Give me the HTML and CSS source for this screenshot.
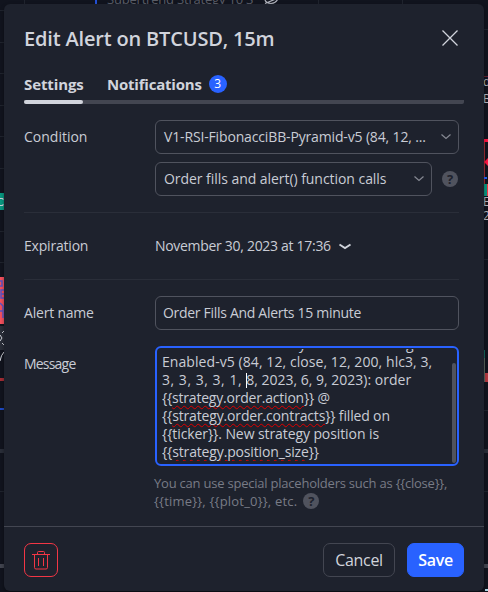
FILE: index.html
```
<!DOCTYPE html>
<html lang="en">
<head>
<meta charset="utf-8">
<title>Edit Alert</title>
<link rel="stylesheet" href="styles.css">
</head>
<body>
<div class="chart" aria-hidden="true">
  <svg width="488" height="592" viewBox="0 0 488 592">
    <path d="M24.5 0V4M318.5 0V4M402.5 0V4M0 10.5H4M0 42.5H4M0 73.5H4M0 105.5H4M0 136.5H4M0 168.5H4M0 231.5H4M0 262.5H4M0 491.5H4M484 29.5H488M484 259.5H488M484 410.5H488M484 491.5H488" stroke="#20242e"/>
    <path d="M96 0V4" stroke="#2451d6" stroke-width="2"/>
    <path d="M0 409H4" stroke="#1e4bc8" stroke-width="2"/>
    <path d="M0 451H4M484 451H488" stroke="#2a2e39" stroke-width="4"/>
    <path d="M0 566H4M484 566H488" stroke="#434651" stroke-width="4"/>
    <path d="M0 193H4V210H0z" fill="#089981"/>
    <path d="M0 198.500H3V200M0 205.500H3V204" fill="none" stroke="#d1d4dc"/>
    <path d="M0 277H4V324H0z" fill="#f7525f"/>
    <path d="M0 281h2v5h-2M4 290h-3v8h3M1 294h3M0 303l3 3v12M0 311h3" fill="none" stroke="#5b55c8" stroke-width="1.500"/>
    <path d="M0 326H4V350H0z" fill="#2a2e39"/>
    <path d="M0 335l2 3-2 3M4 331l-2 2M4 345l-2-2M4 352q-3 3-4 9" fill="none" stroke="#d1d4dc"/>
    <path d="M0 378H4V381H0z" fill="#a52d35"/>
    <path d="M265 3.500l12-5M265 0q1 3 6 3.500q5-.5 6.500-4" fill="none" stroke="#b2b5be" stroke-width="1.200"/>
    <path d="M484 76.500h4" stroke="#65202d"/>
    <path d="M484.500 140v45" stroke="#a52d35"/>
    <path d="M484 139h4v3h-4zM488 158l-4 4 4 4z" fill="#ff1744"/>
    <path d="M484 178h3" stroke="#2962ff" stroke-width="2"/>
    <path d="M484 184h3v12h-3z" fill="#089981"/>
    <path d="M487.500 184v12" stroke="#f23645"/>
    <path d="M484.500 350v8" stroke="#17695f"/>
    <path d="M484.500 358v24" stroke="#5c6660"/>
    <path d="M486.500 373v9" stroke="#b53a42" stroke-width="3"/>
    <path d="M485 590h3" stroke="#b2d8e8" stroke-width="2"/>
  </svg>
  <span class="strategy">Supertrend Strategy 10 3</span>
  <span class="tag tag-a">d</span><span class="tag tag-b">B</span><span class="tag tag-c">E</span><span class="tag tag-d">2</span>
</div>
<main class="dialog">
  <header class="head">
    <h1><span class="t-title">Edit Alert on BTCUSD, 15m</span></h1>
    <svg class="close" width="18" height="18" viewBox="0 0 18 18"><path d="M1.500 1.500l15 15m0-15l-15 15" fill="none" stroke="#d1d4dc" stroke-width="1.300"/></svg>
  </header>
  <nav class="tabs">
    <div class="tab active"><span class="t-set">Settings</span></div>
    <div class="tab"><span class="t-not">Notifications</span><b class="badge">3</b></div>
  </nav>
  <section class="row condition">
    <label>Condition</label>
    <div class="stack">
      <div class="field select"><span class="t-v1">V1-RSI-FibonacciBB-Pyramid-v5 (84, 12, ...</span><svg width="10" height="6" viewBox="0 0 10 6"><path d="M.5.5L5 4.500 9.500.5" fill="none" stroke="#868993" stroke-width="1.200"/></svg></div>
      <div class="pair">
        <div class="field select"><span class="t-ord">Order fills and alert() function calls</span><svg width="10" height="6" viewBox="0 0 10 6"><path d="M.5.5L5 4.500 9.500.5" fill="none" stroke="#868993" stroke-width="1.200"/></svg></div>
        <i class="help">?</i>
      </div>
    </div>
  </section>
  <section class="row expiration">
    <label class="t-exp">Expiration</label>
    <div class="date"><span class="t-date">November 30, 2023 at 17:36</span><svg width="14" height="8" viewBox="0 0 14 8"><path d="M1.500 2.500L7 6 12.500 2.500" fill="none" stroke="#d1d4dc" stroke-width="1.900"/></svg></div>
  </section>
  <section class="row name">
    <label class="t-alert">Alert name</label>
    <div class="field"><span class="t-name">Order Fills And Alerts 15 minute</span></div>
  </section>
  <section class="row message">
    <label class="t-msg">Message</label>
    <div>
      <div class="area">
        <div class="lines">
          <p class="l0"><span>y</span><span>g</span></p>
          <p class="l1">Enabled-v5 (84, 12, close, 12, 200, hlc3, 3,</p>
          <p class="l2"><span>3, 3, 3, 3, 1, </span><i class="caret"></i>8, 2023, 6, 9, 2023): order</p>
          <p class="l3">{{<u>strategy.order.action</u>}} @</p>
          <p class="l4">{{<u>strategy.order.contracts</u>}} filled on</p>
          <p class="l5">{{ticker}}. New strategy position is</p>
          <p class="l6">{{<u>strategy.position_size</u>}}</p>
        </div>
        <div class="thumb"></div>
      </div>
      <div class="hint"><p class="h1">You can use special placeholders such as {{close}},</p><p class="h2"><span>{{time}}, {{plot_0}}, etc.</span><i class="help">?</i></p></div>
    </div>
  </section>
  <footer class="foot">
    <button class="delete" aria-label="Delete"><svg width="18" height="20" viewBox="0 0 18 20"><path d="M0 4.500h18M2.500 4.500v13q0 1.500 1.500 1.500h10q1.500 0 1.500-1.500v-13M5.500 4V2.500q0-1 1-1h5q1 0 1 1V4M6.500 8v8M11.500 8v8" fill="none" stroke="#f23645"/></svg></button>
    <button class="cancel"><span class="t-can">Cancel</span></button>
    <button class="save"><span class="t-save">Save</span></button>
  </footer>
</main>
</body>
</html>
```
FILE: styles.css
```
* { box-sizing: border-box; }
body { margin: 0; width: 488px; height: 592px; overflow: hidden; position: relative; background: #11141e; color: #c9ccd5; font: 14px/18px "Open Sans", "Noto Sans", sans-serif; }
h1, p { margin: 0; font-weight: inherit; white-space: nowrap; }
.chart { position: absolute; inset: 0; }
.strategy { position: absolute; left: 107px; top: -9px; font-size: 13px; line-height: 16px; color: #5a5d67; white-space: nowrap; letter-spacing: -.2px; }
.tag { position: absolute; left: 483px; font-size: 12px; line-height: 14px; color: #b2b5be; }
.tag-a { top: 75px; }
.tag-b { top: 92px; }
.tag-c { top: 195px; }
.tag-d { top: 209px; }
.dialog { position: relative; margin: 4px 4px 0; width: 480px; height: 587px; border-radius: 6px; background: #1e222d; display: flex; flex-direction: column; box-shadow: 0 2px 4px rgba(0, 0, 0, .4); }
.dialog span { white-space: nowrap; }
.head { height: 68px; padding: 0 20px 0 20px; display: flex; justify-content: space-between; align-items: center; }
.head h1 { font-size: 20px; line-height: 28px; font-weight: 600; color: #d1d4dc; padding-top: 2px; letter-spacing: -.17px; }
.close { margin: 0 5px 1px 0; }
.tabs { height: 32px; margin: 0 20px; display: flex; gap: 24px; font-size: 15px; line-height: 16px; font-weight: 700; color: #d1d4dc; background: linear-gradient(#434651, #434651) bottom / 100% 4px no-repeat; border-radius: 2px; }
.tab { position: relative; display: flex; align-items: flex-start; }
.tab > span { margin-top: 4px; }
.active { width: 59px; }
.t-set { letter-spacing: -.1px; }
.t-not { letter-spacing: -.21px; }
.active::after { content: ""; position: absolute; left: 0; right: 0; bottom: 0; height: 4px; border-radius: 2px; background: #d1d4dc; }
.badge { width: 18px; height: 18px; margin: 3px 0 0 7px; border-radius: 50%; background: #2962ff; color: #fff; font-size: 12px; line-height: 18px; text-align: center; font-weight: 400; }
.row { display: grid; grid-template-columns: 131px 304px; margin-left: 20px; width: 435px; }
.row label { white-space: nowrap; }
.field { height: 34px; padding: 0 7px; border: 1px solid #50535e; border-radius: 6px; display: flex; align-items: center; }
.select { justify-content: space-between; padding: 0 7px 0 8px; }
.t-v1 { letter-spacing: -.15px; }
.t-ord { letter-spacing: -.05px; }
.t-exp, .t-alert { letter-spacing: -.2px; }
.t-date { letter-spacing: -.3px; }
.t-name { letter-spacing: -.3px; }
.t-msg { letter-spacing: -.8px; }
.condition { height: 109px; padding-top: 16px; border-bottom: 1px solid #2a2e39; }
.condition label { padding-top: 8px; }
.stack { display: grid; gap: 8px; align-content: start; }
.pair { display: flex; gap: 10px; align-items: center; }
.pair .field { width: 277px; }
.help { display: inline-block; flex: none; width: 16px; height: 16px; border-radius: 50%; background: #50535e; color: #1e222d; font: 700 13px/16px "Open Sans", sans-serif; text-align: center; }
.expiration { height: 67px; border-bottom: 1px solid #2a2e39; align-items: center; }
.date { display: flex; align-items: center; gap: 7px; }
.name { height: 50px; padding-top: 16px; align-items: center; }
.message { padding-top: 16px; }
.message label { padding-top: 9px; }
.area { position: relative; height: 120px; border: 2px solid #2962ff; border-radius: 6px; overflow: hidden; padding-left: 5px; }
.lines { margin-top: -13px; clip-path: inset(14px 0 0 0); }
.lines p { height: 18px; }
.lines u { text-decoration: underline wavy #e00000 1px; text-underline-offset: 2px; text-decoration-skip-ink: none; }
.lines .l0 { display: flex; gap: 100px; padding-left: 137px; }
.l1 { letter-spacing: .07px; }
.l2 span { letter-spacing: .53px; white-space: pre; }
.l3 { letter-spacing: -.21px; }
.l4 { letter-spacing: -.16px; }
.l5 { letter-spacing: -.09px; }
.l6 { letter-spacing: -.15px; }
.caret { display: inline-block; width: 1px; height: 15px; margin-right: -1px; vertical-align: -3px; background: #fff; }
.thumb { position: absolute; right: 1px; top: 15px; bottom: 1px; width: 4px; border-radius: 2px; background: #50535e; }
.hint { margin-top: 8px; margin-left: -1px; color: #787b86; font-size: 13px; }
.h1 { letter-spacing: -.22px; }
.h2 { display: flex; align-items: center; gap: 6px; letter-spacing: .2px; }
.foot { margin-top: auto; height: 65px; border-top: 1px solid #434651; padding: 1px 20px 0; display: flex; align-items: center; }
button { height: 34px; padding: 0; display: grid; place-items: center; border: 1px solid #434651; border-radius: 7px; background: none; color: #d1d4dc; font: 16px/20px "Open Sans", sans-serif; letter-spacing: -.3px; }
.delete { width: 34px; border-color: #f23645; margin-right: auto; }
.cancel { width: 72px; margin-right: 12px; }
.save { width: 57px; background: #2962ff; border-color: #2962ff; color: #fff; font-weight: 600; }
```
